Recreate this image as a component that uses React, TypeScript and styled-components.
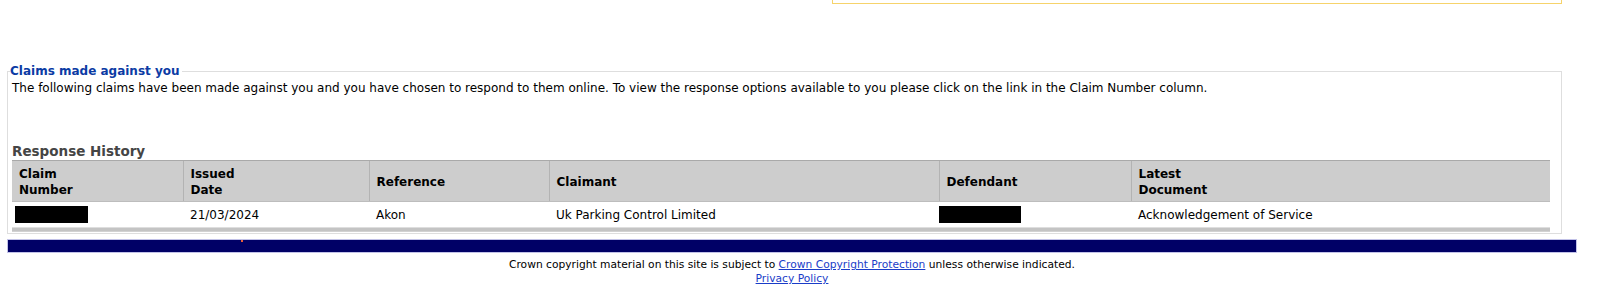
import * as React from 'react';
import styled, { createGlobalStyle } from 'styled-components';

const GlobalStyle = createGlobalStyle`
  html, body {
    margin: 0;
    padding: 0;
    background: #ffffff;
  }
  body {
    font-family: "DejaVu Sans", Verdana, sans-serif;
    color: #000000;
  }
`;

const Page = styled.div`
  width: 1570px;
  padding-left: 7px;
  height: 299px;
  overflow: hidden;
`;

const TopRow = styled.div`
  display: flex;
  justify-content: flex-end;
  padding-right: 15px;
`;

const NoticeBox = styled.div`
  width: 728px;
  height: 3px;
  border: 1px solid #f6d36b;
  border-top: none;
`;

const ClaimsPanel = styled.fieldset`
  margin: 60px 15px 0 0;
  padding: 2px 11px 1px 4px;
  border: 1px solid #dedede;
  min-width: 0;
`;

const PanelTitle = styled.legend`
  margin-left: -2px;
  padding: 0 2px 0 0;
  font-size: 12px;
  line-height: 15px;
  font-weight: bold;
  color: #0b3ba4;
`;

const Intro = styled.p`
  margin: 0;
  font-size: 12px;
  line-height: 15px;
`;

const HistoryTitle = styled.h3`
  margin: 47px 0 0 0;
  font-size: 13.5px;
  line-height: 17px;
  font-weight: bold;
  color: #454545;
`;

const HistoryTable = styled.table`
  width: 1538px;
  border-collapse: collapse;
  table-layout: fixed;
  font-size: 12px;
`;

const HeadCell = styled.th<{ $w: number }>`
  box-sizing: border-box;
  width: ${p => p.$w}px;
  height: 41px;
  background: #cdcdcd;
  border-top: 1px solid #a9a9a9;
  border-left: 1px solid #b3b3b3;
  border-bottom: 1px solid #bdbdbd;
  padding: 4px 8px 3px 7px;
  text-align: left;
  vertical-align: middle;
  font-weight: bold;
  line-height: 16px;
  &:first-child {
    border-left: none;
  }
`;

const Cell = styled.td`
  box-sizing: border-box;
  padding: 1px 8px 0 7px;
  height: 25px;
  line-height: 15px;
  vertical-align: middle;
  white-space: nowrap;
`;

const RedactedCell = styled.td`
  padding: 0;
  height: 25px;
  vertical-align: middle;
`;

const Redaction = styled.span<{ $w: number; $x: number }>`
  display: block;
  width: ${p => p.$w}px;
  height: 17px;
  margin-left: ${p => p.$x}px;
  background: #000000;
`;

const TableBase = styled.td`
  height: 3px;
  padding: 0;
  background: #c4c4c4;
  border-top: 1px solid #dedede;
  border-bottom: 1px solid #d2d2d2;
`;

const NavBar = styled.div`
  position: relative;
  margin-top: 5px;
  height: 12px;
  background: #000066;
  border: 1px solid #c2c2e8;
`;

const Speck = styled.span`
  position: absolute;
  left: 233px;
  top: 0;
  width: 2px;
  height: 2px;
  background: #e8603a;
`;

const Footer = styled.div`
  padding-top: 5px;
  text-align: center;
  font-size: 10.7px;
  line-height: 14px;
  color: #000000;
  a {
    color: #1a3cc8;
    text-decoration: underline;
  }
`;

const columns = [
  { label: ['Claim', 'Number'], w: 171 },
  { label: ['Issued', 'Date'], w: 186 },
  { label: ['Reference'], w: 180 },
  { label: ['Claimant'], w: 390 },
  { label: ['Defendant'], w: 192 },
  { label: ['Latest', 'Document'], w: 419 },
];

const App: React.FC = () => {
  return (
    <Page>
      <GlobalStyle />
      <TopRow>
        <NoticeBox />
      </TopRow>
      <ClaimsPanel>
        <PanelTitle>Claims made against you</PanelTitle>
        <Intro>
          The following claims have been made against you and you have chosen to respond to them online. To view the response options available to you please click on the link in the Claim Number column.
        </Intro>
        <HistoryTitle>Response History</HistoryTitle>
        <HistoryTable>
          <thead>
            <tr>
              {columns.map(c => (
                <HeadCell key={c.label.join(' ')} $w={c.w}>
                  {c.label.map((l, i) => (
                    <React.Fragment key={l}>
                      {i > 0 && <br />}
                      {l}
                    </React.Fragment>
                  ))}
                </HeadCell>
              ))}
            </tr>
          </thead>
          <tbody>
            <tr>
              <RedactedCell>
                <Redaction $w={73} $x={3} />
              </RedactedCell>
              <Cell>21/03/2024</Cell>
              <Cell>Akon</Cell>
              <Cell>Uk Parking Control Limited</Cell>
              <RedactedCell>
                <Redaction $w={82} $x={0} />
              </RedactedCell>
              <Cell>Acknowledgement of Service</Cell>
            </tr>
            <tr>
              <TableBase colSpan={6} />
            </tr>
          </tbody>
        </HistoryTable>
      </ClaimsPanel>
      <NavBar>
        <Speck />
      </NavBar>
      <Footer>
        Crown copyright material on this site is subject to <a href="#copyright">Crown Copyright Protection</a> unless otherwise indicated.
        <br />
        <a href="#privacy">Privacy Policy</a>
      </Footer>
    </Page>
  );
};

export default App;
